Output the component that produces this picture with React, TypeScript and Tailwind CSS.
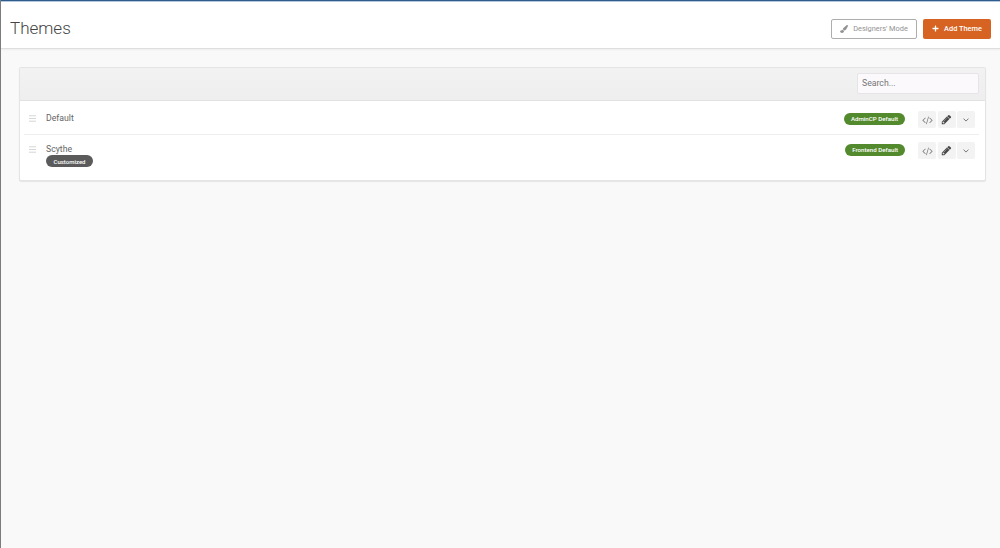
import { useState } from "react";
import { FaPaintBrush, FaPlus } from "react-icons/fa";

type Theme = {
  name: string;
  badge: string;
  customized?: boolean;
};

const themes: Theme[] = [
  { name: "Default", badge: "AdminCP Default" },
  { name: "Scythe", badge: "Frontend Default", customized: true },
];

function GripIcon() {
  return (
    <svg width="7" height="7" viewBox="0 0 7 7" stroke="#d6d6d6" strokeWidth="1">
      <path d="M0 .8h7M0 3.5h7M0 6.2h7" />
    </svg>
  );
}

function CodeIcon() {
  return (
    <svg width="11" height="10" viewBox="0 0 1920 1792" fill="currentColor">
      <path d="M617 1399l-50 50q-10 10-23 10t-23-10l-466-466q-10-10-10-23t10-23l466-466q10-10 23-10t23 10l50 50q10 10 10 23t-10 23l-393 393 393 393q10 10 10 23t-10 23zm591-1067l-373 1291q-4 13-15.5 19.5t-23.5 2.5l-62-17q-13-4-19.5-15.5t-2.5-24.5l373-1291q4-13 15.5-19.5t23.5-2.5l62 17q13 4 19.5 15.5t2.5 24.5zm657 651l-466 466q-10 10-23 10t-23-10l-50-50q-10-10-10-23t10-23l393-393-393-393q-10-10-10-23t10-23l50-50q10-10 23-10t23 10l466 466q10 10 10 23t-10 23z" />
    </svg>
  );
}

function PencilIcon() {
  return (
    <svg width="11" height="11" viewBox="0 0 1792 1792" fill="currentColor">
      <path d="M491 1536l91-91-235-235-91 91v107h128v128h107zm523-928q0-22-22-22-10 0-17 7l-542 542q-7 7-7 17 0 22 22 22 10 0 17-7l542-542q7-7 7-17zm-54-192l416 416-832 832h-416v-416zm683 96q0 53-37 90l-166 166-416-416 166-165q36-38 90-38 53 0 91 38l235 234q37 39 37 91z" />
    </svg>
  );
}

function AngleDownIcon() {
  return (
    <svg width="6" height="4" viewBox="0 0 6 4" fill="none" stroke="currentColor" strokeWidth="1">
      <path d="M.5 .6L3 3.1 5.5 .6" />
    </svg>
  );
}

function ThemeRow({ theme }: { theme: Theme }) {
  const button = "flex h-[17px] w-[18px] items-center justify-center rounded-[2px] bg-[#f3f3f4]";

  return (
    <li className="flex items-start">
      <span className="mt-[11px] ml-[5px] w-[17px]">
        <GripIcon />
      </span>
      <div className="flex flex-1 flex-col items-start">
        <span className="mt-[7px] text-[8.7px] leading-[15px] text-[#666]">{theme.name}</span>
        {theme.customized && (
          <span className="-mt-[2px] flex h-[12px] w-[47px] items-center justify-center rounded-full bg-[#5b5b5b] text-[6px] font-medium text-white">
            Customized
          </span>
        )}
      </div>
      <span className="mt-[9px] mr-[13px] flex h-[12px] items-center rounded-full bg-[#528a2d] px-[7px] pt-px text-[6.15px] font-medium whitespace-nowrap text-white">
        {theme.badge}
      </span>
      <div className="mt-[7px] mr-[4px] flex gap-[1.5px]">
        <button className={`${button} text-[#777]`} aria-label="Edit code">
          <CodeIcon />
        </button>
        <button className={`${button} text-[#484848]`} aria-label="Edit theme">
          <PencilIcon />
        </button>
        <button className={`${button} text-[#777]`} aria-label="More">
          <AngleDownIcon />
        </button>
      </div>
    </li>
  );
}

export default function App() {
  const [query, setQuery] = useState("");
  const visible = themes.filter((t) => t.name.toLowerCase().includes(query.toLowerCase()));

  return (
    <div className="flex h-[548px] w-[1000px] flex-col overflow-hidden border-l border-[#7c7c7c] bg-[#f9f9f9] font-['Roboto',sans-serif]">
      <header className="flex h-[49px] shrink-0 items-center justify-between border-t border-b border-t-[#2e5c8c] border-b-[#dedede] bg-white pr-[9px] pl-[9px] pt-[8px] shadow-[0_1px_2px_rgba(0,0,0,0.05),inset_0_1px_0_#b5c7dc]">
        <h1 className="text-[17px] font-light text-[#444]">Themes</h1>
        <div className="flex gap-[6px]">
          <button className="flex h-[20px] w-[86px] items-center justify-center gap-[5px] rounded-[2px] border border-[#adadad] bg-white text-[7.4px] text-[#929292]">
            <FaPaintBrush size={8} />
            Designers' Mode
          </button>
          <button className="flex h-[20px] w-[68px] items-center justify-center gap-[5px] rounded-[2px] bg-[#d66321] text-[7.4px] font-medium text-white">
            <FaPlus size={7} />
            Add Theme
          </button>
        </div>
      </header>

      <main className="mt-[18px] mr-[14px] ml-[18px] h-[114px] rounded-[2px] border border-[#e4e4e4] bg-white shadow-[0_1px_1px_rgba(0,0,0,0.08)]">
        <div className="flex h-[33px] items-center justify-end border-b border-[#e2e2e2] bg-linear-to-b from-[#f2f2f2] to-[#eeeeee] pr-[6px] pb-px">
          <input
            type="text"
            value={query}
            onChange={(e) => setQuery(e.target.value)}
            placeholder="Search..."
            className="h-[21px] w-[122px] rounded-[2px] border border-[#e6e4e7] bg-[#fbf9fc] px-[4px] pb-px text-[8.7px] text-[#555] outline-none placeholder:text-[#757575]"
          />
        </div>
        <ul className="mr-[6px] ml-[4px] pt-[3px] [&>li:first-child]:h-[31px] [&>li:first-child]:border-b [&>li:first-child]:border-[#eeeeee]">
          {visible.map((theme) => (
            <ThemeRow key={theme.name} theme={theme} />
          ))}
        </ul>
      </main>
    </div>
  );
}
